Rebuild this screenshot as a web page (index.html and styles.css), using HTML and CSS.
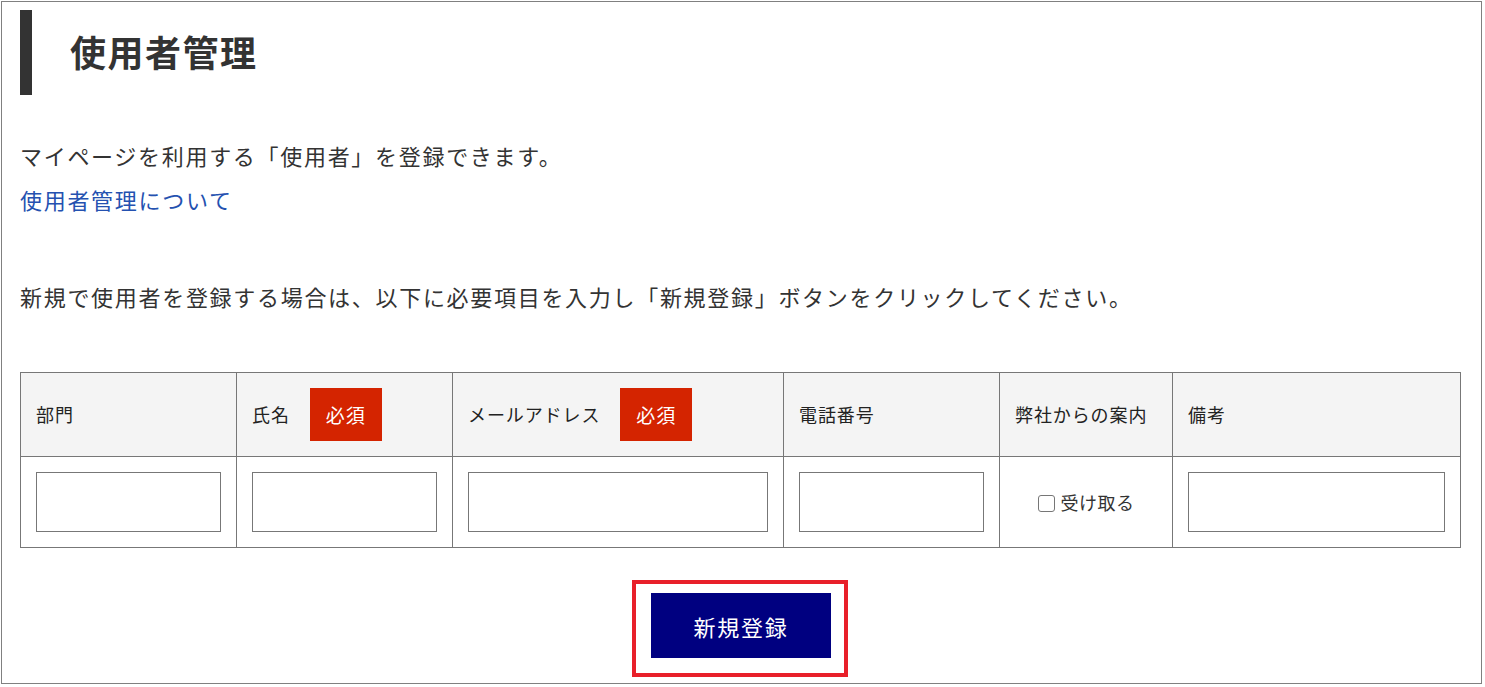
FILE: index.html
```html
<!DOCTYPE html>
<html lang="ja">
<head>
<meta charset="utf-8">
<title>使用者管理</title>
<link rel="stylesheet" href="styles.css">
</head>
<body>
<div class="frame">
  <h1 class="page-title">使用者管理</h1>
  <p class="lead">マイページを利用する「使用者」を登録できます。<br><a class="link" href="#">使用者管理について</a></p>
  <p class="note">新規で使用者を登録する場合は、以下に必要項目を入力し「新規登録」ボタンをクリックしてください。</p>
  <table class="user-table">
    <colgroup>
      <col class="c-dept"><col class="c-name"><col class="c-mail"><col class="c-tel"><col class="c-info"><col class="c-memo">
    </colgroup>
    <thead>
      <tr>
        <th>部門</th>
        <th>氏名<span class="req">必須</span></th>
        <th>メールアドレス<span class="req">必須</span></th>
        <th>電話番号</th>
        <th>弊社からの案内</th>
        <th>備考</th>
      </tr>
    </thead>
    <tbody>
      <tr>
        <td><input class="field" type="text"></td>
        <td><input class="field" type="text"></td>
        <td><input class="field" type="text"></td>
        <td><input class="field" type="text"></td>
        <td class="check-cell"><label class="check"><input class="box" type="checkbox">受け取る</label></td>
        <td><input class="field" type="text"></td>
      </tr>
    </tbody>
  </table>
  <div class="actions">
    <div class="highlight">
      <button class="submit" type="button">新規登録</button>
    </div>
  </div>
</div>
</body>
</html>
```
FILE: styles.css
```css
html, body {
  margin: 0;
  padding: 0;
  background: #fff;
}
body {
  font-family: "Noto Sans CJK JP", "Noto Sans", sans-serif;
  color: #333;
}
.frame {
  box-sizing: border-box;
  margin: 1px 0 0 1px;
  width: 1481px;
  height: 683px;
  border: 1px solid #808080;
  padding: 8px 0 0 18px;
}
.page-title {
  margin: 0;
  height: 85px;
  line-height: 83px;
  border-left: 12px solid #333;
  padding-left: 38px;
  font-size: 36px;
  font-weight: 700;
  letter-spacing: 1.5px;
  color: #333;
}
.lead, .note {
  margin: 0;
  font-size: 22px;
  line-height: 44px;
  letter-spacing: 1.7px;
}
.lead {
  margin-top: 38px;
}
.link {
  color: #2451b0;
  text-decoration: none;
}
.note {
  margin-top: 53px;
}
.user-table {
  margin-top: 54px;
  border-collapse: collapse;
  table-layout: fixed;
  width: 1440px;
}
.c-dept, .c-name, .c-tel { width: 216px; }
.c-mail { width: 331px; }
.c-info { width: 173px; }
.c-memo { width: 288px; }
.user-table th,
.user-table td {
  border: 1px solid #777;
  padding: 15px;
  text-align: left;
  vertical-align: middle;
}
.user-table th {
  background: #f4f4f4;
  font-weight: 400;
  font-size: 18px;
  letter-spacing: 0.9px;
  color: #222;
  height: 53px;
  line-height: 53px;
  white-space: nowrap;
}
.req {
  display: inline-block;
  vertical-align: top;
  margin-left: 20px;
  height: 53px;
  line-height: 53px;
  padding: 0 16px;
  background: #d42400;
  color: #fff;
  font-size: 19px;
}
.field {
  display: block;
  box-sizing: border-box;
  width: 100%;
  height: 60px;
  margin: 0;
  border: 1px solid #777;
  background: #fff;
  font-size: 18px;
}
.check-cell {
  text-align: center !important;
}
.check {
  font-size: 18px;
  color: #333;
  letter-spacing: 0.5px;
}
.box {
  appearance: none;
  -webkit-appearance: none;
  box-sizing: border-box;
  display: inline-block;
  width: 17px;
  height: 17px;
  margin: 0 6px 0 0;
  border: 1px solid #767676;
  border-radius: 3px;
  background: #fff;
  vertical-align: -2px;
}
.actions {
  display: flex;
  justify-content: center;
  margin-top: 32px;
  padding-right: 21px;
}
.highlight {
  border: 4px solid #e8202a;
  padding: 9px 13px 15px 15px;
}
.submit {
  display: block;
  width: 180px;
  height: 65px;
  border: 0;
  background: #000080;
  color: #fff;
  font-family: "Noto Sans CJK JP", "Noto Sans", sans-serif;
  font-size: 22px;
  letter-spacing: 1.7px;
  cursor: pointer;
}
```
